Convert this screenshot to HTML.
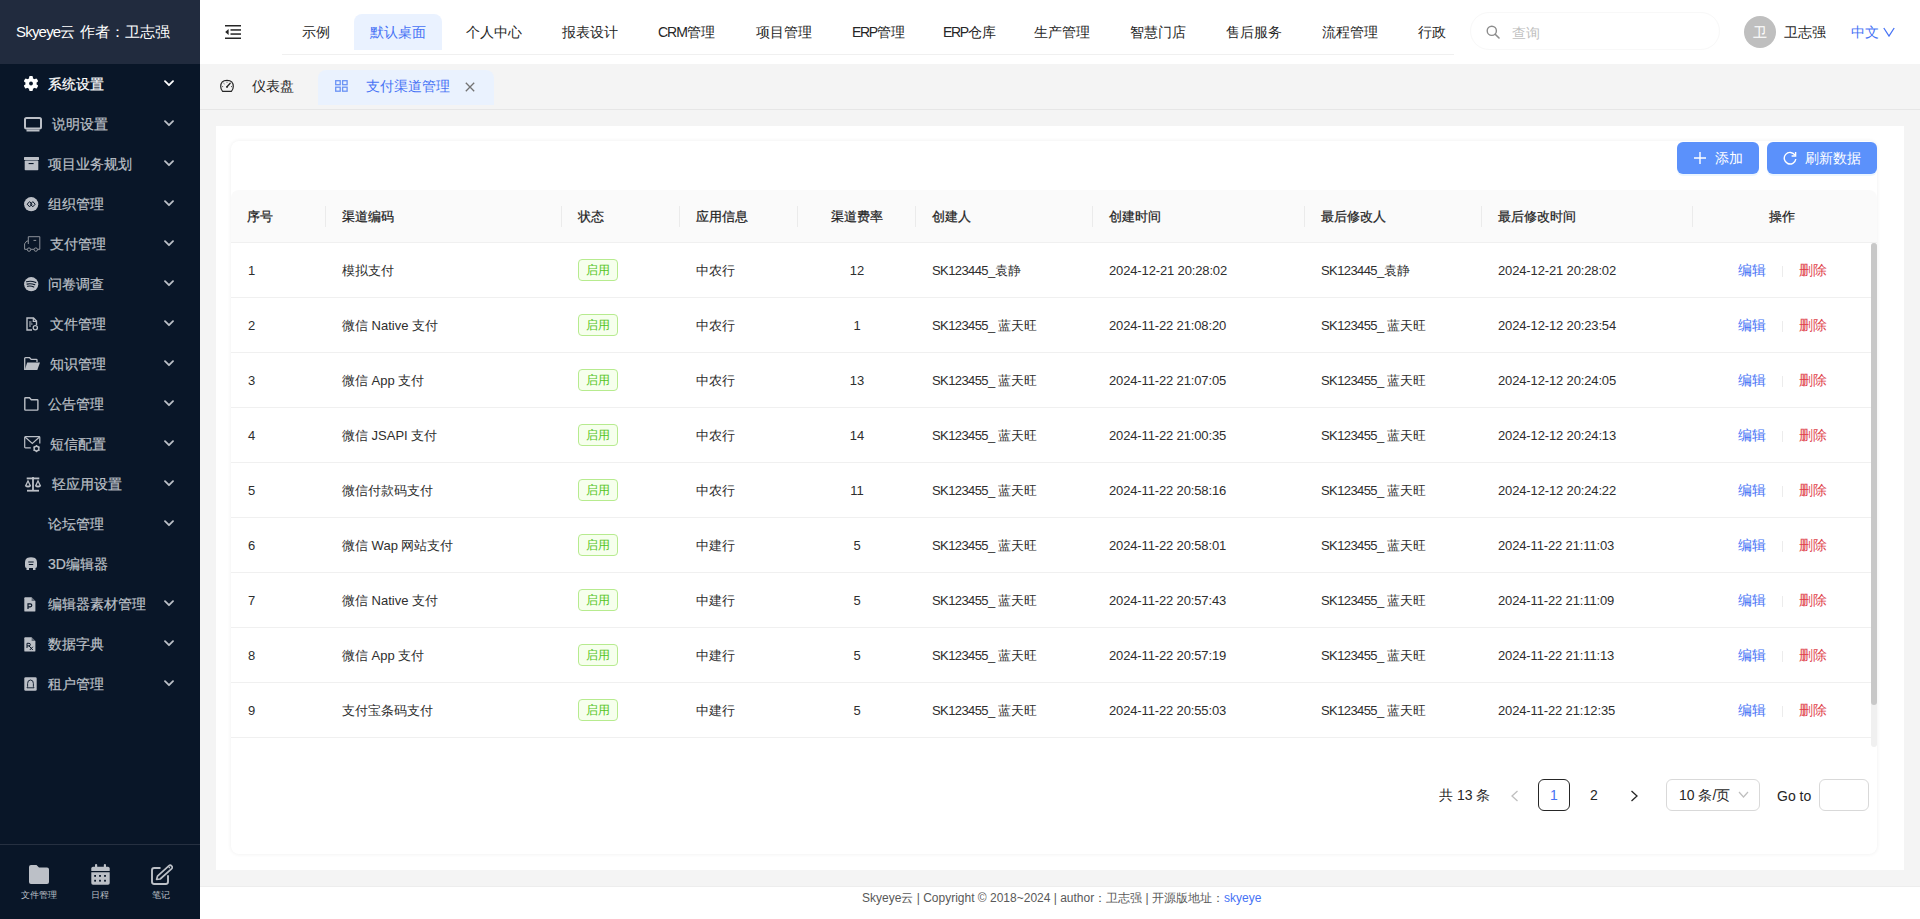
<!DOCTYPE html><html><head><meta charset="utf-8"><style>
*{box-sizing:border-box;margin:0;padding:0}
html,body{width:1920px;height:919px;overflow:hidden;background:#f4f4f4;font-family:"Liberation Sans",sans-serif;color:#262626}
.a{position:absolute;white-space:nowrap}
#side{position:absolute;left:0;top:0;width:200px;height:919px;background:#091628}
#sidehead{position:absolute;left:0;top:0;width:200px;height:64px;background:#212b3e}
.mi{position:absolute;left:0;width:200px;height:40px;font-size:14px;color:#bcc0c7}
.mi .t{position:absolute;top:0;line-height:40px;-webkit-text-stroke:0.2px currentColor}
.mi svg{position:absolute}
#top{position:absolute;left:200px;top:0;width:1720px;height:64px;background:#fff}
.nav{position:absolute;top:14px;height:36px;line-height:36px;font-size:14px;color:#262626}
#tabs{position:absolute;left:200px;top:64px;width:1720px;height:46px;background:#f4f4f4;border-bottom:1px solid #e6e6e6}
#card{position:absolute;left:216px;top:126px;width:1688px;height:744px;background:#fff}
#panel{position:absolute;left:231px;top:141px;width:1646px;height:713px;background:#fff;border-radius:8px;box-shadow:0 0 4px rgba(0,0,0,0.07)}
.btn{position:absolute;top:142px;height:32px;background:#5b91fb;border-radius:6px;color:#fff;font-size:14px;box-shadow:0 2px 0 rgba(5,145,255,0.08)}
#thead{position:absolute;left:231px;top:190px;width:1646px;height:53px;background:#fafafa;border-radius:8px 8px 0 0;border-bottom:1px solid #f0f0f0}
.th{position:absolute;top:0;line-height:52px;font-size:13px;font-weight:normal;-webkit-text-stroke:0.25px #1f1f1f;color:#1f1f1f}
.sep{position:absolute;top:16px;width:1px;height:21px;background:#ebebeb}
.row{position:absolute;left:231px;width:1640px;height:55px;border-bottom:1px solid #f0f0f0}
.td{position:absolute;top:0;line-height:55px;font-size:13px;color:#2e2e2e}
.tag{position:absolute;left:347px;top:16px;width:40px;height:22px;line-height:20px;border:1px solid #b7eb8f;background:#f6ffed;color:#52c41a;font-size:12px;text-align:center;border-radius:4px}
.op{position:absolute;top:0;line-height:55px;font-size:14px}
#footer{position:absolute;left:200px;top:886px;width:1720px;height:33px;background:#fff;border-top:1px solid #ededed;font-size:12px;color:#595959}
.pg{position:absolute;top:779px;height:32px;line-height:30px;font-size:14px;text-align:center}
</style></head><body>
<div id="side"><div id="sidehead"><div class="a" style="left:16px;top:21px;font-size:15px;color:#fff;line-height:22px"><span style="letter-spacing:-0.8px">Skyeye</span>云 作者：卫志强</div></div>
<div class="mi" style="top:64px;color:#ffffff"><svg style="left:23px;top:11px" width="16" height="16" viewBox="0 0 16 16"><g fill="#ffffff"><circle cx="8" cy="8.5" r="5.6"/><rect x="6.1" y="1.1" width="3.8" height="4" rx="1" transform="rotate(0 8 8.5)"/><rect x="6.1" y="1.1" width="3.8" height="4" rx="1" transform="rotate(60 8 8.5)"/><rect x="6.1" y="1.1" width="3.8" height="4" rx="1" transform="rotate(120 8 8.5)"/><rect x="6.1" y="1.1" width="3.8" height="4" rx="1" transform="rotate(180 8 8.5)"/><rect x="6.1" y="1.1" width="3.8" height="4" rx="1" transform="rotate(240 8 8.5)"/><rect x="6.1" y="1.1" width="3.8" height="4" rx="1" transform="rotate(300 8 8.5)"/></g><circle cx="8" cy="8.5" r="1.9" fill="#091628"/></svg><div class="t" style="left:48px">系统设置</div><svg style="left:164px;top:16px" width="10" height="7" viewBox="0 0 10 7"><path d="M1 1.2 L5 5.2 L9 1.2" fill="none" stroke="#ffffff" stroke-width="1.8" stroke-linecap="round" stroke-linejoin="round"/></svg></div>
<div class="mi" style="top:104px;color:#bcc0c7"><svg style="left:24px;top:13px" width="18" height="15" viewBox="0 0 18 15"><rect x="1" y="1" width="16" height="10.5" rx="1.5" fill="none" stroke="#bcc0c7" stroke-width="2"/><rect x="2.5" y="12.5" width="13" height="2" fill="#bcc0c7"/></svg><div class="t" style="left:52px">说明设置</div><svg style="left:164px;top:16px" width="10" height="7" viewBox="0 0 10 7"><path d="M1 1.2 L5 5.2 L9 1.2" fill="none" stroke="#bcc0c7" stroke-width="1.8" stroke-linecap="round" stroke-linejoin="round"/></svg></div>
<div class="mi" style="top:144px;color:#bcc0c7"><svg style="left:24px;top:13px" width="15" height="14" viewBox="0 0 15 14"><rect x="0" y="0" width="15" height="3" rx="0.5" fill="#bcc0c7"/><rect x="0.7" y="3.6" width="13.6" height="9.6" rx="0.8" fill="#bcc0c7"/><rect x="4.6" y="6" width="5" height="1.1" fill="#091628"/></svg><div class="t" style="left:48px">项目业务规划</div><svg style="left:164px;top:16px" width="10" height="7" viewBox="0 0 10 7"><path d="M1 1.2 L5 5.2 L9 1.2" fill="none" stroke="#bcc0c7" stroke-width="1.8" stroke-linecap="round" stroke-linejoin="round"/></svg></div>
<div class="mi" style="top:184px;color:#bcc0c7"><svg style="left:24px;top:13px" width="15" height="15" viewBox="0 0 15 15"><circle cx="7.2" cy="7.2" r="7.1" fill="#bcc0c7"/><path d="M5.6 4.6 L3.2 7.2 L5.6 9.8 L8 7.2 Z M8.8 4.6 L6.4 7.2 L8.8 9.8 L11.2 7.2 Z" fill="none" stroke="#091628" stroke-width="1" stroke-linejoin="round"/></svg><div class="t" style="left:48px">组织管理</div><svg style="left:164px;top:16px" width="10" height="7" viewBox="0 0 10 7"><path d="M1 1.2 L5 5.2 L9 1.2" fill="none" stroke="#bcc0c7" stroke-width="1.8" stroke-linecap="round" stroke-linejoin="round"/></svg></div>
<div class="mi" style="top:224px;color:#bcc0c7"><svg style="left:24px;top:12px" width="17" height="17" viewBox="0 0 17 17"><path d="M4.3 5 L4.3 0.7 L15.8 0.7 L15.8 13.3 L13.5 13.3 M10 13.3 L6.8 13.3 M3.3 13.3 L0.6 13.3 L0.6 7.8 L2.8 5 L4.3 5 L4.3 8" fill="none" stroke="#8d9199" stroke-width="1"/><circle cx="5" cy="13.6" r="1.7" fill="none" stroke="#8d9199" stroke-width="1"/><circle cx="11.8" cy="13.6" r="1.7" fill="none" stroke="#8d9199" stroke-width="1"/><path d="M9.5 4.4 L12.2 4.4" stroke="#8d9199" stroke-width="1"/></svg><div class="t" style="left:50px">支付管理</div><svg style="left:164px;top:16px" width="10" height="7" viewBox="0 0 10 7"><path d="M1 1.2 L5 5.2 L9 1.2" fill="none" stroke="#bcc0c7" stroke-width="1.8" stroke-linecap="round" stroke-linejoin="round"/></svg></div>
<div class="mi" style="top:264px;color:#bcc0c7"><svg style="left:24px;top:13px" width="15" height="15" viewBox="0 0 15 15"><circle cx="7.2" cy="7.2" r="7.1" fill="#bcc0c7"/><path d="M2.5 4.8 Q7 3.4 11.8 5.6 M3 7.1 Q7 6 10.8 7.8 M3.5 9.3 Q6.8 8.5 9.8 9.9" fill="none" stroke="#091628" stroke-width="1.1" stroke-linecap="round"/></svg><div class="t" style="left:48px">问卷调查</div><svg style="left:164px;top:16px" width="10" height="7" viewBox="0 0 10 7"><path d="M1 1.2 L5 5.2 L9 1.2" fill="none" stroke="#bcc0c7" stroke-width="1.8" stroke-linecap="round" stroke-linejoin="round"/></svg></div>
<div class="mi" style="top:304px;color:#bcc0c7"><svg style="left:26px;top:13px" width="13" height="14" viewBox="0 0 13 14"><path d="M6 13 L1 13 L1 1 L7.5 1 L10.5 4 L10.5 8" fill="none" stroke="#bcc0c7" stroke-width="1.4"/><path d="M7.3 1 L7.3 4.3 L10.5 4.3" fill="none" stroke="#bcc0c7" stroke-width="1.2"/><path d="M3 5 L5.5 5 M3 7 L6.5 7 M3 9 L5 9" stroke="#bcc0c7" stroke-width="1.1"/><circle cx="9.3" cy="10.8" r="2.1" fill="none" stroke="#bcc0c7" stroke-width="1.3"/></svg><div class="t" style="left:50px">文件管理</div><svg style="left:164px;top:16px" width="10" height="7" viewBox="0 0 10 7"><path d="M1 1.2 L5 5.2 L9 1.2" fill="none" stroke="#bcc0c7" stroke-width="1.8" stroke-linecap="round" stroke-linejoin="round"/></svg></div>
<div class="mi" style="top:344px;color:#bcc0c7"><svg style="left:24px;top:13px" width="17" height="14" viewBox="0 0 17 14"><path d="M0.7 13 L0.7 1.5 Q0.7 0.7 1.5 0.7 L5.6 0.7 L7.2 2.4 L12.3 2.4 Q13 2.4 13 3.1 L13 5" fill="none" stroke="#bcc0c7" stroke-width="1.3"/><path d="M0.7 13 L3.2 5.6 L16 5.6 L13.3 13 Z" fill="#bcc0c7"/></svg><div class="t" style="left:50px">知识管理</div><svg style="left:164px;top:16px" width="10" height="7" viewBox="0 0 10 7"><path d="M1 1.2 L5 5.2 L9 1.2" fill="none" stroke="#bcc0c7" stroke-width="1.8" stroke-linecap="round" stroke-linejoin="round"/></svg></div>
<div class="mi" style="top:384px;color:#bcc0c7"><svg style="left:24px;top:13px" width="15" height="14" viewBox="0 0 15 14"><path d="M0.8 12.5 L0.8 1.5 Q0.8 0.8 1.5 0.8 L5.5 0.8 L7.3 2.8 L13.2 2.8 Q13.9 2.8 13.9 3.5 L13.9 12.5 Q13.9 13.1 13.2 13.1 L1.5 13.1 Q0.8 13.1 0.8 12.5 Z" fill="none" stroke="#bcc0c7" stroke-width="1.4"/></svg><div class="t" style="left:48px">公告管理</div><svg style="left:164px;top:16px" width="10" height="7" viewBox="0 0 10 7"><path d="M1 1.2 L5 5.2 L9 1.2" fill="none" stroke="#bcc0c7" stroke-width="1.8" stroke-linecap="round" stroke-linejoin="round"/></svg></div>
<div class="mi" style="top:424px;color:#bcc0c7"><svg style="left:24px;top:12px" width="17" height="17" viewBox="0 0 17 17"><path d="M6.8 11.9 L1.5 11.9 Q0.7 11.9 0.7 11.1 L0.7 1.5 Q0.7 0.7 1.5 0.7 L15 0.7 Q15.8 0.7 15.8 1.5 L15.8 7.5" fill="none" stroke="#bcc0c7" stroke-width="1.2"/><path d="M1 1 L8.3 7.5 L15.5 1" fill="none" stroke="#bcc0c7" stroke-width="1.2"/><circle cx="12.5" cy="12.6" r="2.4" fill="none" stroke="#bcc0c7" stroke-width="1.4"/><rect x="11.9" y="9" width="1.2" height="1.5" fill="#bcc0c7" transform="rotate(0 12.5 12.6)"/><rect x="11.9" y="9" width="1.2" height="1.5" fill="#bcc0c7" transform="rotate(60 12.5 12.6)"/><rect x="11.9" y="9" width="1.2" height="1.5" fill="#bcc0c7" transform="rotate(120 12.5 12.6)"/><rect x="11.9" y="9" width="1.2" height="1.5" fill="#bcc0c7" transform="rotate(180 12.5 12.6)"/><rect x="11.9" y="9" width="1.2" height="1.5" fill="#bcc0c7" transform="rotate(240 12.5 12.6)"/><rect x="11.9" y="9" width="1.2" height="1.5" fill="#bcc0c7" transform="rotate(300 12.5 12.6)"/></svg><div class="t" style="left:50px">短信配置</div><svg style="left:164px;top:16px" width="10" height="7" viewBox="0 0 10 7"><path d="M1 1.2 L5 5.2 L9 1.2" fill="none" stroke="#bcc0c7" stroke-width="1.8" stroke-linecap="round" stroke-linejoin="round"/></svg></div>
<div class="mi" style="top:464px;color:#bcc0c7"><svg style="left:24px;top:13px" width="18" height="15" viewBox="0 0 18 15"><rect x="2.7" y="0.5" width="12.6" height="1.8" fill="#bcc0c7"/><rect x="8.1" y="0" width="1.8" height="13" fill="#bcc0c7"/><rect x="3" y="12.8" width="12" height="1.8" fill="#bcc0c7"/><path d="M4 2.5 L0.8 9 Q4 12 7.2 9 Z M14 2.5 L10.8 9 Q14 12 17.2 9 Z" fill="#bcc0c7"/><path d="M4 5.2 L2.6 8.4 L5.4 8.4 Z M14 5.2 L12.6 8.4 L15.4 8.4 Z" fill="#091628"/></svg><div class="t" style="left:52px">轻应用设置</div><svg style="left:164px;top:16px" width="10" height="7" viewBox="0 0 10 7"><path d="M1 1.2 L5 5.2 L9 1.2" fill="none" stroke="#bcc0c7" stroke-width="1.8" stroke-linecap="round" stroke-linejoin="round"/></svg></div>
<div class="mi" style="top:504px;color:#bcc0c7"><div class="t" style="left:48px">论坛管理</div><svg style="left:164px;top:16px" width="10" height="7" viewBox="0 0 10 7"><path d="M1 1.2 L5 5.2 L9 1.2" fill="none" stroke="#bcc0c7" stroke-width="1.8" stroke-linecap="round" stroke-linejoin="round"/></svg></div>
<div class="mi" style="top:544px;color:#bcc0c7"><svg style="left:24px;top:13px" width="14" height="14" viewBox="0 0 14 14"><path d="M3 1 Q7 -0.5 11 1 Q13 2.5 13 5 L13 9 Q13 11 11.5 11 L11.5 13 L9 13 L9 11 L5 11 L5 13 L2.5 13 L2.5 11 Q1 11 1 9 L1 5 Q1 2.5 3 1 Z" fill="#bcc0c7"/><path d="M4.3 5 L9.7 5 M4.8 7.5 L9.2 7.5" stroke="#091628" stroke-width="1.1"/></svg><div class="t" style="left:48px">3D编辑器</div></div>
<div class="mi" style="top:584px;color:#bcc0c7"><svg style="left:24px;top:13px" width="12" height="15" viewBox="0 0 12 15"><path d="M1.2 0.3 L7.6 0.3 L11.4 4.1 L11.4 13.7 Q11.4 14.6 10.5 14.6 L1.2 14.6 Q0.3 14.6 0.3 13.7 L0.3 1.2 Q0.3 0.3 1.2 0.3 Z" fill="#bcc0c7"/><path d="M7.6 0.3 L7.6 4.1 L11.4 4.1" fill="#091628" opacity="0.5"/><path d="M4 12 L4 6.8 L6.2 6.8 Q7.8 6.8 7.8 8.3 Q7.8 9.8 6.2 9.8 L4 9.8" fill="none" stroke="#091628" stroke-width="1.2"/></svg><div class="t" style="left:48px">编辑器素材管理</div><svg style="left:164px;top:16px" width="10" height="7" viewBox="0 0 10 7"><path d="M1 1.2 L5 5.2 L9 1.2" fill="none" stroke="#bcc0c7" stroke-width="1.8" stroke-linecap="round" stroke-linejoin="round"/></svg></div>
<div class="mi" style="top:624px;color:#bcc0c7"><svg style="left:24px;top:13px" width="12" height="15" viewBox="0 0 12 15"><path d="M1.2 0.3 L7.6 0.3 L11.4 4.1 L11.4 13.7 Q11.4 14.6 10.5 14.6 L1.2 14.6 Q0.3 14.6 0.3 13.7 L0.3 1.2 Q0.3 0.3 1.2 0.3 Z" fill="#bcc0c7"/><path d="M7.6 0.3 L7.6 4.1 L11.4 4.1" fill="#091628" opacity="0.5"/><path d="M3 11 L3 6.3 L5 6.3 Q6.4 6.3 6.4 7.6 Q6.4 8.9 5 8.9 L3 8.9 M5 8.9 L8.8 13 M8.8 9.8 L5.8 13" fill="none" stroke="#091628" stroke-width="1"/></svg><div class="t" style="left:48px">数据字典</div><svg style="left:164px;top:16px" width="10" height="7" viewBox="0 0 10 7"><path d="M1 1.2 L5 5.2 L9 1.2" fill="none" stroke="#bcc0c7" stroke-width="1.8" stroke-linecap="round" stroke-linejoin="round"/></svg></div>
<div class="mi" style="top:664px;color:#bcc0c7"><svg style="left:24px;top:13px" width="13" height="14" viewBox="0 0 13 14"><rect x="0.3" y="0.3" width="12.4" height="13.4" rx="1.3" fill="#bcc0c7"/><path d="M3 10.8 L3.6 9.5 L3.6 6.5 Q3.6 3 6.5 3 Q9.4 3 9.4 6.5 L9.4 9.5 L10 10.8 Z" fill="none" stroke="#091628" stroke-width="0.9"/></svg><div class="t" style="left:48px">租户管理</div><svg style="left:164px;top:16px" width="10" height="7" viewBox="0 0 10 7"><path d="M1 1.2 L5 5.2 L9 1.2" fill="none" stroke="#bcc0c7" stroke-width="1.8" stroke-linecap="round" stroke-linejoin="round"/></svg></div>
<div class="a" style="left:0;top:844px;width:200px;height:1px;background:#263041"></div>
<svg class="a" style="left:28px;top:864px" width="22" height="21" viewBox="0 0 22 21"><path d="M1 3 Q1 1 3 1 L8.5 1 L11 3.6 L19 3.6 Q21 3.6 21 5.6 L21 18 Q21 20 19 20 L3 20 Q1 20 1 18 Z" fill="#bcc0c7"/></svg>
<svg class="a" style="left:91px;top:864px" width="19" height="21" viewBox="0 0 19 21"><rect x="4" y="0" width="2.2" height="4" rx="1.1" fill="#bcc0c7"/><rect x="12.8" y="0" width="2.2" height="4" rx="1.1" fill="#bcc0c7"/><path d="M0.3 4.5 Q0.3 2.8 2 2.8 L17 2.8 Q18.7 2.8 18.7 4.5 L18.7 6.9 L0.3 6.9 Z" fill="#bcc0c7"/><path d="M0.3 8.3 L18.7 8.3 L18.7 19 Q18.7 20.8 17 20.8 L2 20.8 Q0.3 20.8 0.3 19 Z" fill="#bcc0c7"/><rect x="3.2" y="11" width="1.8" height="1.8" fill="#091628"/><rect x="3.2" y="15.8" width="1.8" height="1.8" fill="#091628"/><rect x="8.1" y="11" width="1.8" height="1.8" fill="#091628"/><rect x="8.1" y="15.8" width="1.8" height="1.8" fill="#091628"/><rect x="13.1" y="11" width="1.8" height="1.8" fill="#091628"/><rect x="13.1" y="15.8" width="1.8" height="1.8" fill="#091628"/></svg>
<svg class="a" style="left:150px;top:863px" width="23" height="23" viewBox="0 0 23 23"><path d="M9.8 5 L4.2 5 Q2 5 2 7.2 L2 18.8 Q2 21 4.2 21 L15.8 21 Q18 21 18 18.8 L18 13" fill="none" stroke="#bcc0c7" stroke-width="1.9" stroke-linecap="round"/><path d="M6.6 16.4 L7.5 13.1 L18.8 2.9 A2 2 0 0 1 21.5 5.9 L10.2 16 Z" fill="none" stroke="#bcc0c7" stroke-width="1.7" stroke-linejoin="round"/><circle cx="19.3" cy="4.6" r="0.8" fill="#bcc0c7"/></svg>
<div class="a" style="left:21px;top:889px;font-size:9.3px;color:#bcc0c7;line-height:12px">文件管理</div>
<div class="a" style="left:91px;top:889px;font-size:9.3px;color:#bcc0c7;line-height:12px">日程</div>
<div class="a" style="left:152px;top:889px;font-size:9.3px;color:#bcc0c7;line-height:12px">笔记</div>
</div>
<div id="top"></div>
<svg class="a" style="left:225px;top:25px" width="16" height="14" viewBox="0 0 16 14"><rect x="0" y="0" width="16" height="1.5" fill="#262626"/><rect x="5.5" y="4.2" width="10.5" height="1.5" fill="#262626"/><rect x="5.5" y="8.3" width="10.5" height="1.5" fill="#262626"/><rect x="0" y="12.5" width="16" height="1.5" fill="#262626"/><path d="M0.2 7 L3.6 4.1 L3.6 9.9 Z" fill="#262626"/></svg>
<div class="a" style="left:282px;top:54px;width:1172px;height:1px;background:#f0f0f0"></div>
<div class="a" style="left:354px;top:14px;width:88px;height:36px;background:#eaf2ff;border-radius:8px 8px 0 0"></div>
<div class="nav a" style="left:302px;color:#262626">示例</div>
<div class="nav a" style="left:370px;color:#4773f5">默认桌面</div>
<div class="nav a" style="left:466px;color:#262626">个人中心</div>
<div class="nav a" style="left:562px;color:#262626">报表设计</div>
<div class="nav a" style="left:658px;color:#262626"><span style="letter-spacing:-1px">CRM</span>管理</div>
<div class="nav a" style="left:756px;color:#262626">项目管理</div>
<div class="nav a" style="left:852px;color:#262626"><span style="letter-spacing:-1.4px">ERP</span>管理</div>
<div class="nav a" style="left:943px;color:#262626"><span style="letter-spacing:-1.4px">ERP</span>仓库</div>
<div class="nav a" style="left:1034px;color:#262626">生产管理</div>
<div class="nav a" style="left:1130px;color:#262626">智慧门店</div>
<div class="nav a" style="left:1226px;color:#262626">售后服务</div>
<div class="nav a" style="left:1322px;color:#262626">流程管理</div>
<div class="nav a" style="left:1418px;color:#262626">行政</div>
<div class="a" style="left:1470px;top:12px;width:250px;height:38px;border:1px solid #f8f8f8;border-radius:19px"></div>
<svg class="a" style="left:1486px;top:25px" width="14" height="14" viewBox="0 0 14 14"><circle cx="5.8" cy="5.8" r="4.6" fill="none" stroke="#8c8c8c" stroke-width="1.4"/><path d="M9.2 9.2 L13 13" stroke="#8c8c8c" stroke-width="1.6" stroke-linecap="round"/></svg>
<div class="a" style="left:1512px;top:23px;font-size:14px;line-height:20px;color:#bfbfbf">查询</div>
<div class="a" style="left:1744px;top:16px;width:32px;height:32px;border-radius:16px;background:#bfbfbf;color:#fff;font-size:14px;line-height:32px;text-align:center">卫</div>
<div class="a" style="left:1784px;top:21px;font-size:14px;line-height:22px;color:#1f1f1f">卫志强</div>
<div class="a" style="left:1851px;top:21px;font-size:14px;line-height:22px;color:#4773f5">中文</div>
<svg class="a" style="left:1883px;top:27px" width="12" height="10" viewBox="0 0 12 10"><path d="M0.8 1 L6 9 L11.2 1" fill="none" stroke="#4773f5" stroke-width="1.3"/></svg>
<div id="tabs"></div>
<svg class="a" style="left:220px;top:79px" width="14" height="14" viewBox="0 0 14 14"><path d="M2.6 12.4 Q0.7 10.4 0.7 7.6 Q0.7 1.3 7 1.3 Q13.3 1.3 13.3 7.6 Q13.3 10.4 11.4 12.4 Z" fill="none" stroke="#262626" stroke-width="1.2"/><path d="M7 7.8 L10.2 4.2" stroke="#262626" stroke-width="1.3" stroke-linecap="round"/><circle cx="7" cy="7.9" r="0.9" fill="#262626"/><path d="M7 2.8 L7 3.6 M2.3 7.6 L3.1 7.6 M11 7.6 L11.8 7.6 M3.6 4.2 L4.4 4.9" stroke="#262626" stroke-width="1" /></svg>
<div class="a" style="left:252px;top:76px;font-size:14px;line-height:20px;color:#262626">仪表盘</div>
<div class="a" style="left:318px;top:70px;width:176px;height:35px;background:#eaf2fe;border-radius:8px 8px 0 0"></div>
<svg class="a" style="left:335px;top:80px" width="13" height="12" viewBox="0 0 13 12"><g fill="none" stroke="#6b93f5" stroke-width="1.3"><rect x="0.7" y="0.7" width="4.5" height="4" /><rect x="7.6" y="0.7" width="4.5" height="4"/><rect x="0.7" y="7.2" width="4.5" height="4"/><rect x="7.6" y="7.2" width="4.5" height="4"/></g></svg>
<div class="a" style="left:366px;top:76px;font-size:14px;line-height:20px;color:#4773f5">支付渠道管理</div>
<svg class="a" style="left:465px;top:82px" width="10" height="10" viewBox="0 0 10 10"><path d="M0.8 0.8 L9.2 9.2 M9.2 0.8 L0.8 9.2" stroke="#737373" stroke-width="1.3"/></svg>
<div id="card"></div><div id="panel"></div>
<div class="btn" style="left:1677px;width:82px"><svg class="a" style="left:16px;top:9px" width="14" height="14" viewBox="0 0 14 14"><path d="M7 1 L7 13 M1 7 L13 7" stroke="#fff" stroke-width="1.4"/></svg><div class="a" style="left:38px;top:6px;line-height:20px">添加</div></div>
<div class="btn" style="left:1767px;width:110px"><svg class="a" style="left:16px;top:9px" width="14" height="14" viewBox="0 0 14 14"><path d="M12 4.2 A5.8 5.8 0 1 0 12.8 8" fill="none" stroke="#fff" stroke-width="1.4"/><path d="M12.6 1 L12.6 5 L8.6 5" fill="none" stroke="#fff" stroke-width="1.4"/></svg><div class="a" style="left:38px;top:6px;line-height:20px">刷新数据</div></div>
<div id="thead"></div>
<div class="th a" style="left:247px;top:191px">序号</div>
<div class="th a" style="left:342px;top:191px">渠道编码</div>
<div class="sep a" style="left:325px;top:206px"></div>
<div class="th a" style="left:578px;top:191px">状态</div>
<div class="sep a" style="left:561px;top:206px"></div>
<div class="th a" style="left:696px;top:191px">应用信息</div>
<div class="sep a" style="left:679px;top:206px"></div>
<div class="th a" style="left:798px;top:191px;width:118px;text-align:center">渠道费率</div>
<div class="sep a" style="left:797px;top:206px"></div>
<div class="th a" style="left:932px;top:191px">创建人</div>
<div class="sep a" style="left:915px;top:206px"></div>
<div class="th a" style="left:1109px;top:191px">创建时间</div>
<div class="sep a" style="left:1092px;top:206px"></div>
<div class="th a" style="left:1321px;top:191px">最后修改人</div>
<div class="sep a" style="left:1304px;top:206px"></div>
<div class="th a" style="left:1498px;top:191px">最后修改时间</div>
<div class="sep a" style="left:1481px;top:206px"></div>
<div class="th a" style="left:1693px;top:191px;width:178px;text-align:center">操作</div>
<div class="sep a" style="left:1692px;top:206px"></div>
<div class="row" style="top:243px"><div class="td a" style="left:17px">1</div><div class="td a" style="left:111px">模拟支付</div><div class="tag">启用</div><div class="td a" style="left:465px">中农行</div><div class="td a" style="left:567px;width:118px;text-align:center">12</div><div class="td a" style="left:701px"><span style="letter-spacing:-0.6px">SK123445_</span>袁静</div><div class="td a" style="left:878px;letter-spacing:-0.14px">2024-12-21 20:28:02</div><div class="td a" style="left:1090px"><span style="letter-spacing:-0.6px">SK123445_</span>袁静</div><div class="td a" style="left:1267px;letter-spacing:-0.14px">2024-12-21 20:28:02</div><div class="op a" style="left:1507px;color:#4773f5">编辑</div><div class="a" style="left:1551px;top:23px;width:1px;height:11px;background:#ececec"></div><div class="op a" style="left:1568px;color:#e0424b">删除</div></div>
<div class="row" style="top:298px"><div class="td a" style="left:17px">2</div><div class="td a" style="left:111px">微信 Native 支付</div><div class="tag">启用</div><div class="td a" style="left:465px">中农行</div><div class="td a" style="left:567px;width:118px;text-align:center">1</div><div class="td a" style="left:701px"><span style="letter-spacing:-0.6px">SK123455_</span> 蓝天旺</div><div class="td a" style="left:878px;letter-spacing:-0.14px">2024-11-22 21:08:20</div><div class="td a" style="left:1090px"><span style="letter-spacing:-0.6px">SK123455_</span> 蓝天旺</div><div class="td a" style="left:1267px;letter-spacing:-0.14px">2024-12-12 20:23:54</div><div class="op a" style="left:1507px;color:#4773f5">编辑</div><div class="a" style="left:1551px;top:23px;width:1px;height:11px;background:#ececec"></div><div class="op a" style="left:1568px;color:#e0424b">删除</div></div>
<div class="row" style="top:353px"><div class="td a" style="left:17px">3</div><div class="td a" style="left:111px">微信 App 支付</div><div class="tag">启用</div><div class="td a" style="left:465px">中农行</div><div class="td a" style="left:567px;width:118px;text-align:center">13</div><div class="td a" style="left:701px"><span style="letter-spacing:-0.6px">SK123455_</span> 蓝天旺</div><div class="td a" style="left:878px;letter-spacing:-0.14px">2024-11-22 21:07:05</div><div class="td a" style="left:1090px"><span style="letter-spacing:-0.6px">SK123455_</span> 蓝天旺</div><div class="td a" style="left:1267px;letter-spacing:-0.14px">2024-12-12 20:24:05</div><div class="op a" style="left:1507px;color:#4773f5">编辑</div><div class="a" style="left:1551px;top:23px;width:1px;height:11px;background:#ececec"></div><div class="op a" style="left:1568px;color:#e0424b">删除</div></div>
<div class="row" style="top:408px"><div class="td a" style="left:17px">4</div><div class="td a" style="left:111px">微信 JSAPI 支付</div><div class="tag">启用</div><div class="td a" style="left:465px">中农行</div><div class="td a" style="left:567px;width:118px;text-align:center">14</div><div class="td a" style="left:701px"><span style="letter-spacing:-0.6px">SK123455_</span> 蓝天旺</div><div class="td a" style="left:878px;letter-spacing:-0.14px">2024-11-22 21:00:35</div><div class="td a" style="left:1090px"><span style="letter-spacing:-0.6px">SK123455_</span> 蓝天旺</div><div class="td a" style="left:1267px;letter-spacing:-0.14px">2024-12-12 20:24:13</div><div class="op a" style="left:1507px;color:#4773f5">编辑</div><div class="a" style="left:1551px;top:23px;width:1px;height:11px;background:#ececec"></div><div class="op a" style="left:1568px;color:#e0424b">删除</div></div>
<div class="row" style="top:463px"><div class="td a" style="left:17px">5</div><div class="td a" style="left:111px">微信付款码支付</div><div class="tag">启用</div><div class="td a" style="left:465px">中农行</div><div class="td a" style="left:567px;width:118px;text-align:center">11</div><div class="td a" style="left:701px"><span style="letter-spacing:-0.6px">SK123455_</span> 蓝天旺</div><div class="td a" style="left:878px;letter-spacing:-0.14px">2024-11-22 20:58:16</div><div class="td a" style="left:1090px"><span style="letter-spacing:-0.6px">SK123455_</span> 蓝天旺</div><div class="td a" style="left:1267px;letter-spacing:-0.14px">2024-12-12 20:24:22</div><div class="op a" style="left:1507px;color:#4773f5">编辑</div><div class="a" style="left:1551px;top:23px;width:1px;height:11px;background:#ececec"></div><div class="op a" style="left:1568px;color:#e0424b">删除</div></div>
<div class="row" style="top:518px"><div class="td a" style="left:17px">6</div><div class="td a" style="left:111px">微信 Wap 网站支付</div><div class="tag">启用</div><div class="td a" style="left:465px">中建行</div><div class="td a" style="left:567px;width:118px;text-align:center">5</div><div class="td a" style="left:701px"><span style="letter-spacing:-0.6px">SK123455_</span> 蓝天旺</div><div class="td a" style="left:878px;letter-spacing:-0.14px">2024-11-22 20:58:01</div><div class="td a" style="left:1090px"><span style="letter-spacing:-0.6px">SK123455_</span> 蓝天旺</div><div class="td a" style="left:1267px;letter-spacing:-0.14px">2024-11-22 21:11:03</div><div class="op a" style="left:1507px;color:#4773f5">编辑</div><div class="a" style="left:1551px;top:23px;width:1px;height:11px;background:#ececec"></div><div class="op a" style="left:1568px;color:#e0424b">删除</div></div>
<div class="row" style="top:573px"><div class="td a" style="left:17px">7</div><div class="td a" style="left:111px">微信 Native 支付</div><div class="tag">启用</div><div class="td a" style="left:465px">中建行</div><div class="td a" style="left:567px;width:118px;text-align:center">5</div><div class="td a" style="left:701px"><span style="letter-spacing:-0.6px">SK123455_</span> 蓝天旺</div><div class="td a" style="left:878px;letter-spacing:-0.14px">2024-11-22 20:57:43</div><div class="td a" style="left:1090px"><span style="letter-spacing:-0.6px">SK123455_</span> 蓝天旺</div><div class="td a" style="left:1267px;letter-spacing:-0.14px">2024-11-22 21:11:09</div><div class="op a" style="left:1507px;color:#4773f5">编辑</div><div class="a" style="left:1551px;top:23px;width:1px;height:11px;background:#ececec"></div><div class="op a" style="left:1568px;color:#e0424b">删除</div></div>
<div class="row" style="top:628px"><div class="td a" style="left:17px">8</div><div class="td a" style="left:111px">微信 App 支付</div><div class="tag">启用</div><div class="td a" style="left:465px">中建行</div><div class="td a" style="left:567px;width:118px;text-align:center">5</div><div class="td a" style="left:701px"><span style="letter-spacing:-0.6px">SK123455_</span> 蓝天旺</div><div class="td a" style="left:878px;letter-spacing:-0.14px">2024-11-22 20:57:19</div><div class="td a" style="left:1090px"><span style="letter-spacing:-0.6px">SK123455_</span> 蓝天旺</div><div class="td a" style="left:1267px;letter-spacing:-0.14px">2024-11-22 21:11:13</div><div class="op a" style="left:1507px;color:#4773f5">编辑</div><div class="a" style="left:1551px;top:23px;width:1px;height:11px;background:#ececec"></div><div class="op a" style="left:1568px;color:#e0424b">删除</div></div>
<div class="row" style="top:683px"><div class="td a" style="left:17px">9</div><div class="td a" style="left:111px">支付宝条码支付</div><div class="tag">启用</div><div class="td a" style="left:465px">中建行</div><div class="td a" style="left:567px;width:118px;text-align:center">5</div><div class="td a" style="left:701px"><span style="letter-spacing:-0.6px">SK123455_</span> 蓝天旺</div><div class="td a" style="left:878px;letter-spacing:-0.14px">2024-11-22 20:55:03</div><div class="td a" style="left:1090px"><span style="letter-spacing:-0.6px">SK123455_</span> 蓝天旺</div><div class="td a" style="left:1267px;letter-spacing:-0.14px">2024-11-22 21:12:35</div><div class="op a" style="left:1507px;color:#4773f5">编辑</div><div class="a" style="left:1551px;top:23px;width:1px;height:11px;background:#ececec"></div><div class="op a" style="left:1568px;color:#e0424b">删除</div></div>
<div class="a" style="left:1871px;top:243px;width:6px;height:504px;background:#f0f0f0;border-radius:3px"></div>
<div class="a" style="left:1871px;top:243px;width:6px;height:462px;background:#c8c8c8;border-radius:3px"></div>
<div class="a" style="left:1439px;top:784px;font-size:14px;line-height:22px;color:#262626">共 13 条</div>
<svg class="a" style="left:1510px;top:790px" width="9" height="12" viewBox="0 0 9 12"><path d="M7.5 1 L2 6 L7.5 11" fill="none" stroke="#bfbfbf" stroke-width="1.3"/></svg>
<div class="pg a" style="left:1538px;width:32px;border:1px solid #262626;border-radius:6px;color:#4773f5">1</div>
<div class="pg a" style="left:1578px;top:780px;width:32px;color:#262626">2</div>
<svg class="a" style="left:1630px;top:790px" width="9" height="12" viewBox="0 0 9 12"><path d="M1.5 1 L7 6 L1.5 11" fill="none" stroke="#262626" stroke-width="1.3"/></svg>
<div class="pg a" style="left:1666px;width:94px;border:1px solid #d9d9d9;border-radius:6px"></div>
<div class="a" style="left:1679px;top:784px;font-size:14px;line-height:22px;color:#262626">10 条/页</div>
<svg class="a" style="left:1738px;top:791px" width="11" height="8" viewBox="0 0 11 8"><path d="M1 1 L5.5 6 L10 1" fill="none" stroke="#bfbfbf" stroke-width="1.2"/></svg>
<div class="a" style="left:1777px;top:785px;font-size:14px;line-height:22px;color:#262626">Go to</div>
<div class="pg a" style="left:1819px;width:50px;border:1px solid #d9d9d9;border-radius:6px"></div>
<div id="footer"><div class="a" style="left:662px;top:3px;line-height:16px">Skyeye云 | Copyright © 2018~2024 | author：卫志强 | 开源版地址：<span style="color:#4773f5">skyeye</span></div></div>
</body></html>
